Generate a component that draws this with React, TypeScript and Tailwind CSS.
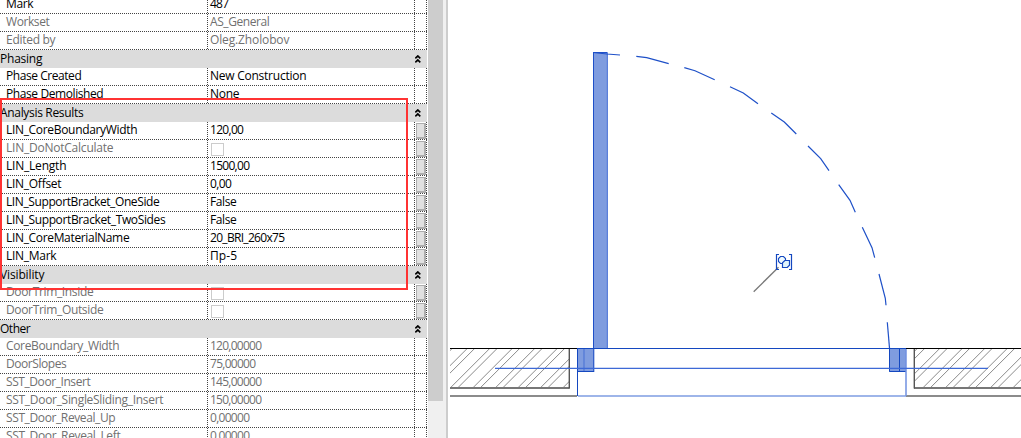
type Row = {
  label: string;
  value?: string;
  header?: boolean;
  muted?: boolean;
  check?: boolean;
  button?: boolean;
  /** drawn width of the label and of the value */
  w: number;
  vw?: number;
};

const rows: Row[] = [
  { label: "Mark", value: "487", w: 27, vw: 18 },
  { label: "Workset", value: "AS_General", muted: true, w: 43, vw: 59 },
  { label: "Edited by", value: "Oleg.Zholobov", muted: true, w: 49, vw: 79 },
  { label: "Phasing", header: true, w: 42 },
  { label: "Phase Created", value: "New Construction", w: 75, vw: 96 },
  { label: "Phase Demolished", value: "None", w: 97, vw: 29 },
  { label: "Analysis Results", header: true, w: 83 },
  { label: "LIN_CoreBoundaryWidth", value: "120,00", button: true, w: 131, vw: 33 },
  { label: "LIN_DoNotCalculate", muted: true, check: true, button: true, w: 107 },
  { label: "LIN_Length", value: "1500,00", button: true, w: 60, vw: 39 },
  { label: "LIN_Offset", value: "0,00", button: true, w: 55, vw: 21 },
  { label: "LIN_SupportBracket_OneSide", value: "False", button: true, w: 153, vw: 26 },
  { label: "LIN_SupportBracket_TwoSides", value: "False", button: true, w: 159, vw: 26 },
  { label: "LIN_CoreMaterialName", value: "20_BRI_260x75", button: true, w: 123, vw: 74 },
  { label: "LIN_Mark", value: "Пр-5", button: true, w: 50, vw: 27 },
  { label: "Visibility", header: true, w: 44 },
  { label: "DoorTrim_Inside", muted: true, check: true, button: true, w: 87 },
  { label: "DoorTrim_Outside", muted: true, check: true, button: true, w: 97 },
  { label: "Other", header: true, w: 30 },
  { label: "CoreBoundary_Width", value: "120,00000", muted: true, w: 113, vw: 51 },
  { label: "DoorSlopes", value: "75,00000", muted: true, w: 60, vw: 45 },
  { label: "SST_Door_Insert", value: "145,00000", muted: true, w: 84, vw: 51 },
  { label: "SST_Door_SingleSliding_Insert", value: "150,00000", muted: true, w: 157, vw: 51 },
  { label: "SST_Door_Reveal_Up", value: "0,00000", muted: true, w: 109, vw: 39 },
  { label: "SST_Door_Reveal_Left", value: "0,00000", muted: true, w: 114, vw: 39 },
];

const canvas = typeof document !== "undefined" ? document.createElement("canvas").getContext("2d") : null;

function Fit({ text, width }: { text: string; width: number }) {
  let spacing = 0;
  if (canvas) {
    canvas.font = '12px "Open Sans"';
    spacing = (width + 0.3 - canvas.measureText(text).width) / text.length;
  }
  return (
    <span className="whitespace-pre" style={{ letterSpacing: `${spacing}px` }}>
      {text}
    </span>
  );
}

function VDots() {
  return <div className="w-px shrink-0 bg-[repeating-linear-gradient(180deg,#444_0px,#444_1px,#fff_1px,#fff_2px)]" />;
}

function Chevrons() {
  return (
    <svg className="mr-[6px] mt-[5px] h-2 w-[6px] shrink-0" viewBox="0 0 6 8" fill="none" stroke="#000" strokeWidth="1.6">
      <path d="M.3 3.4 2.8 .9l2.5 2.5M.3 7.4 2.8 4.9l2.5 2.5" />
    </svg>
  );
}

function PropertyRow({ row }: { row: Row }) {
  if (row.header) {
    return (
      <div className="flex h-[18px] shrink-0 justify-between bg-[#dcdcdc] leading-[18px] text-black">
        <Fit text={row.label} width={row.w} />
        <Chevrons />
      </div>
    );
  }
  return (
    <div className={`flex h-[18px] shrink-0 flex-col leading-[16px] ${row.muted ? "text-[#707070]" : "text-black"}`}>
      <div className="flex h-[17px] shrink-0">
        <div className="w-[207px] shrink-0 pl-[6px]">
          <Fit text={row.label} width={row.w} />
        </div>
        <VDots />
        <div className="w-[206px] shrink-0 pl-[2px]">
          {row.check && <div className="ml-px mt-[3px] size-[13px] border border-[#ccc] bg-white" />}
          {row.value && <Fit text={row.value} width={row.vw ?? 0} />}
        </div>
        <VDots />
        <div className="w-[11px] shrink-0 pl-px pt-px">
          {row.button && (
            <div className="h-4 w-[10px] border-b-2 border-l border-r-2 border-t border-[#adadad] bg-[#e1e1e1]" />
          )}
        </div>
        <VDots />
      </div>
      <div className="h-px shrink-0 bg-[repeating-linear-gradient(90deg,#444_0px,#444_1px,#fff_1px,#fff_2px)]" />
    </div>
  );
}

const starts = (from: number, count: number) =>
  Array.from({ length: count }, (_, i) => [from + i * 22.5, from + i * 22.5 + 7.4]).flat();

function Hatch({ clip, from, count }: { clip: string; from: number; count: number }) {
  return (
    <g clipPath={`url(#${clip})`} stroke="#8a8a8a" strokeWidth="1">
      {starts(from, count).map((x) => (
        <line key={x} x1={x} y1={388} x2={x + 40} y2={348} />
      ))}
    </g>
  );
}

const arcs = [
  "593,52.5 607,54 620,55",
  "636.3,56.3 646.7,57.7 668.7,63.7",
  "684.3,67.7 695,70.7 714.7,79.7",
  "730,86.7 743.3,93 758,103.7",
  "771.3,113 784.3,122 796.3,134",
  "808,146 820.7,158.7 829,170.7",
  "838.7,184.7 850,200.3 855.3,212.3",
  "862.3,227.3 872,247.7 874.7,257.7",
  "879,274 885.3,298.3 886,305.3",
  "887.3,322.3 889.5,348",
];

function Plan() {
  return (
    <svg className="h-[438px] w-[573px] shrink-0" viewBox="448 0 573 438" fill="none">
      <defs>
        <clipPath id="left">
          <rect x="450" y="349" width="119" height="39" />
        </clipPath>
        <clipPath id="right">
          <rect x="914" y="349" width="107" height="39" />
        </clipPath>
      </defs>
      <Hatch clip="left" from={405.2} count={8} />
      <Hatch clip="right" from={877.7} count={7} />
      <path d="M450 388H569.5M914 388h107" stroke="#777" strokeWidth="1.8" />
      <path d="M569.3 349v39.5M914.3 349v39.5" stroke="#555" strokeWidth="1.4" />
      <path d="M450 396h127M906 396h115" stroke="#666" strokeWidth="1.6" />
      <path d="M450 348.5h127M906 348.5h115" stroke="#000" />
      <g fill="#7f9cdf">
        <rect x="593" y="52" width="15" height="296" />
        <rect x="577" y="349" width="17" height="23" />
        <rect x="889" y="349" width="17" height="23" />
      </g>
      <path d="M593.5 348V52.5H607" stroke="#1f50c8" />
      <path d="M607.3 53v295" stroke="#5379d9" />
      <path d="M577 348.5h329M577.5 349v47M577 371.5h17M593.8 349v23" stroke="#1448c0" />
      <path d="M584 349v22" stroke="#5c80d8" strokeWidth="1.6" />
      <path d="M889.5 348v23.5H906M899.5 349v22" stroke="#1448c0" />
      <path d="M906 349v47" stroke="#7090e0" strokeWidth="1.5" />
      <path d="M578 396h328" stroke="#7e9ce2" strokeWidth="1.7" />
      <path d="M495 368.3h493" stroke="#3d69d6" strokeWidth="1.3" />
      {arcs.map((points) => (
        <polyline key={points} points={points} stroke="#1e50c8" strokeWidth="1.2" />
      ))}
      <path d="M753.7 291.7 778.5 267.3" stroke="#777" strokeWidth="1.3" />
      <path d="M779 254.5h-2.5v15h2.5M789 254.5h2.5v15H789" stroke="#1448c0" strokeWidth="1.2" />
      <path
        d="M780.5 256.5h3l2 2v3l-2 2h-3l-2-2v-3z"
        fill="#eefaff"
        stroke="#1448c0"
        strokeWidth="1.1"
      />
      <path
        d="M784.8 260.5h4.7v4.7l-2.2 2.3h-4.8v-4.7z"
        fill="#dff4fc"
        stroke="#1448c0"
        strokeWidth="1.2"
      />
    </svg>
  );
}

export default function App() {
  return (
    <div className="relative flex h-[438px] w-[1021px] overflow-hidden bg-white">
      <div className="-mt-1 flex w-[427px] shrink-0 flex-col font-['Open_Sans',sans-serif] text-[12px]">
        {rows.map((row) => (
          <PropertyRow key={row.label} row={row} />
        ))}
      </div>
      <div className="ml-px w-[18px] shrink-0 bg-[#f0f0f0]">
        <div className="h-[401px] w-[15px] bg-[#cdcdcd]" />
      </div>
      <div className="w-[2px] shrink-0 bg-[#cdcdcd]" />
      <Plan />
      <div className="absolute left-0 top-[98px] h-[192px] w-[408px] border-2 border-[#ff3333]" />
    </div>
  );
}
